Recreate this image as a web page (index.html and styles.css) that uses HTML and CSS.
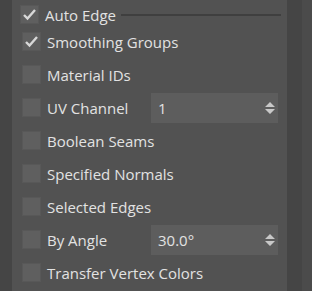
FILE: index.html
```html
<!DOCTYPE html>
<html lang="en">
<head>
  <meta charset="UTF-8" />
  <title>Weld Options</title>
  <link rel="stylesheet" href="styles.css">
</head>
<body>
  <div class="frame">
    <div class="gutter"></div>
    <main class="panel">
      <div class="group-head">
        <span class="check on">
          <svg viewBox="0 0 19 19" width="19" height="19"><path d="M4 10 L7.5 13.5 L15 5" /></svg>
        </span>
        <span class="label">Auto Edge</span>
        <span class="rule"></span>
      </div>

      <div class="row">
        <span class="check on">
          <svg viewBox="0 0 19 19" width="19" height="19"><path d="M4 10 L7.5 13.5 L15 5" /></svg>
        </span>
        <span class="label">Smoothing Groups</span>
      </div>
      <div class="row">
        <span class="check"></span>
        <span class="label">Material IDs</span>
      </div>
      <div class="row">
        <span class="check"></span>
        <span class="label fixed">UV Channel</span>
        <div class="spinner">
          <span>1</span>
          <span class="arrows">
            <svg viewBox="0 0 10 13" width="10" height="13"><path d="M5 0 L10 5 L0 5 Z M0 7 L10 7 L5 12 Z" /></svg>
          </span>
        </div>
      </div>
      <div class="row">
        <span class="check"></span>
        <span class="label">Boolean Seams</span>
      </div>
      <div class="row">
        <span class="check"></span>
        <span class="label">Specified Normals</span>
      </div>
      <div class="row">
        <span class="check"></span>
        <span class="label">Selected Edges</span>
      </div>
      <div class="row">
        <span class="check"></span>
        <span class="label fixed">By Angle</span>
        <div class="spinner">
          <span>30.0°</span>
          <span class="arrows">
            <svg viewBox="0 0 10 13" width="10" height="13"><path d="M5 0 L10 5 L0 5 Z M0 7 L10 7 L5 12 Z" /></svg>
          </span>
        </div>
      </div>
      <div class="row">
        <span class="check"></span>
        <span class="label">Transfer Vertex Colors</span>
      </div>
    </main>
    <div class="scroll-track"></div>
    <div class="scroll-edge"></div>
  </div>
</body>
</html>
```

FILE: styles.css
```css
body {
  margin: 0;
  background-color: #444444;
  font-family: "Open Sans", "Noto Sans", sans-serif;
  font-size: 15px;
  color: #e2e2e2;
}
.frame {
  display: flex;
  width: 312px;
  height: 291px;
  overflow: hidden;
}
.gutter {
  width: 12px;
  background-color: #454545;
}
.panel {
  width: 275px;
  background-color: #525252;
  padding-left: 8px;
  box-sizing: border-box;
}
.scroll-track {
  width: 15px;
  background-color: #454545;
}
.scroll-edge {
  width: 10px;
  background-color: #4b4b4b;
}
.group-head {
  display: flex;
  align-items: center;
  height: 19px;
  margin-top: 5px;
  margin-bottom: 1px;
  padding-right: 6px;
}
.group-head .label {
  margin-left: 6px;
}
.rule {
  flex: 1;
  height: 2px;
  margin-left: 5px;
  background-color: #3f3f3f;
}
.row {
  display: flex;
  align-items: center;
  height: 33px;
  padding-left: 2px;
}
.check {
  width: 19px;
  height: 19px;
  box-sizing: border-box;
  border: 1px solid #585858;
  background-color: #5f5f5f;
  flex-shrink: 0;
}
.check svg {
  display: block;
  margin: -1px;
  fill: none;
  stroke: #d8d8d8;
  stroke-width: 2.4;
}
.label {
  margin-left: 6px;
  white-space: nowrap;
}
.label.fixed {
  width: 104px;
}
.spinner {
  width: 127px;
  height: 30px;
  margin-top: 1px;
  box-sizing: border-box;
  background-color: #5d5d5d;
  display: flex;
  align-items: center;
  justify-content: space-between;
  padding: 0 3px 0 7px;
}
.arrows svg {
  display: block;
  fill: #c8c8c8;
}
```
